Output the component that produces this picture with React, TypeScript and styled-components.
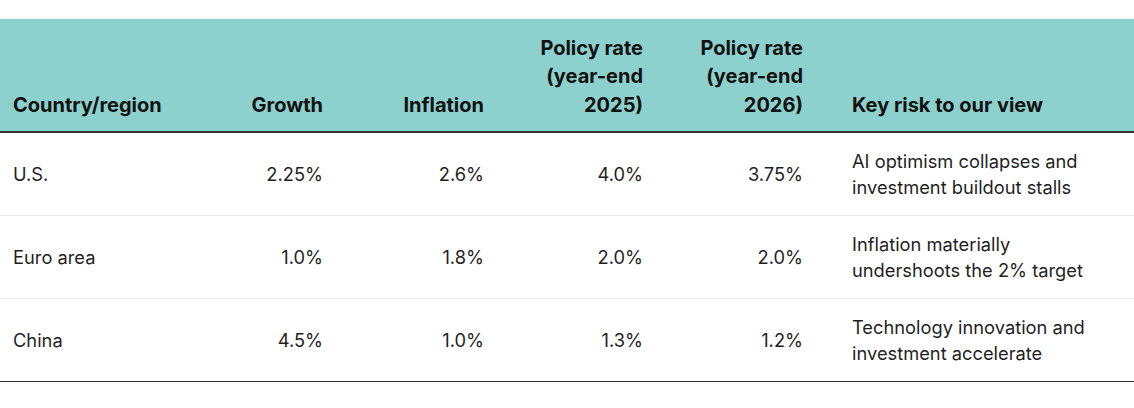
import styled, { createGlobalStyle } from "styled-components"

const GlobalStyle = createGlobalStyle`
    html, body {
        margin: 0;
        padding: 0;
        background: #ffffff;
    }
    body {
        font-family: Inter, "Noto Sans", sans-serif;
        color: #1a1a1a;
    }
`

const Page = styled.div`
    padding-top: 19px;
    width: 1134px;
`

const Table = styled.table`
    width: 100%;
    border-collapse: collapse;
    table-layout: fixed;
    border-bottom: 1px solid #333333;
`

const HeadRow = styled.tr`
    background: #8dd1ce;
    border-bottom: 2px solid #333333;
`

const HeadCell = styled.th<{ $align?: "left" | "right"; $padLeft?: number }>`
    height: 113px;
    box-sizing: border-box;
    vertical-align: bottom;
    text-align: ${(p) => p.$align ?? "right"};
    padding: 0 13px 12px ${(p) => p.$padLeft ?? 13}px;
    font-size: 20px;
    font-weight: 700;
    line-height: 28.5px;
    color: #111111;
`

const BodyRow = styled.tr`
    border-top: 1px solid #e8e8e8;
    &:first-child {
        border-top: none;
    }
`

const Cell = styled.td<{ $align?: "left" | "right"; $padLeft?: number }>`
    height: 83px;
    box-sizing: border-box;
    vertical-align: middle;
    text-align: ${(p) => p.$align ?? "right"};
    padding: 1px 13px 0 ${(p) => p.$padLeft ?? 13}px;
    font-size: 18.3px;
    line-height: 26px;
    color: #1f1f1f;
`

const rows = [
    { country: "U.S.", growth: "2.25%", inflation: "2.6%", rate25: "4.0%", rate26: "3.75%", risk: ["AI optimism collapses and", "investment buildout stalls"] },
    { country: "Euro area", growth: "1.0%", inflation: "1.8%", rate25: "2.0%", rate26: "2.0%", risk: ["Inflation materially", "undershoots the 2% target"] },
    { country: "China", growth: "4.5%", inflation: "1.0%", rate25: "1.3%", rate26: "1.2%", risk: ["Technology innovation and", "investment accelerate"] },
]

export default function App() {
    return (
        <Page>
            <GlobalStyle />
            <Table>
                <colgroup>
                    <col style={{ width: 200 }} />
                    <col style={{ width: 136 }} />
                    <col style={{ width: 161 }} />
                    <col style={{ width: 159 }} />
                    <col style={{ width: 160 }} />
                    <col />
                </colgroup>
                <thead>
                    <HeadRow>
                        <HeadCell $align="left">Country/region</HeadCell>
                        <HeadCell>Growth</HeadCell>
                        <HeadCell>Inflation</HeadCell>
                        <HeadCell>Policy rate<br />(year-end<br />2025)</HeadCell>
                        <HeadCell>Policy rate<br />(year-end<br />2026)</HeadCell>
                        <HeadCell $align="left" $padLeft={36}>Key risk to our view</HeadCell>
                    </HeadRow>
                </thead>
                <tbody>
                    {rows.map((r) => (
                        <BodyRow key={r.country}>
                            <Cell $align="left">{r.country}</Cell>
                            <Cell>{r.growth}</Cell>
                            <Cell>{r.inflation}</Cell>
                            <Cell>{r.rate25}</Cell>
                            <Cell>{r.rate26}</Cell>
                            <Cell $align="left" $padLeft={36}>
                                {r.risk[0]}<br />{r.risk[1]}
                            </Cell>
                        </BodyRow>
                    ))}
                </tbody>
            </Table>
        </Page>
    )
}
